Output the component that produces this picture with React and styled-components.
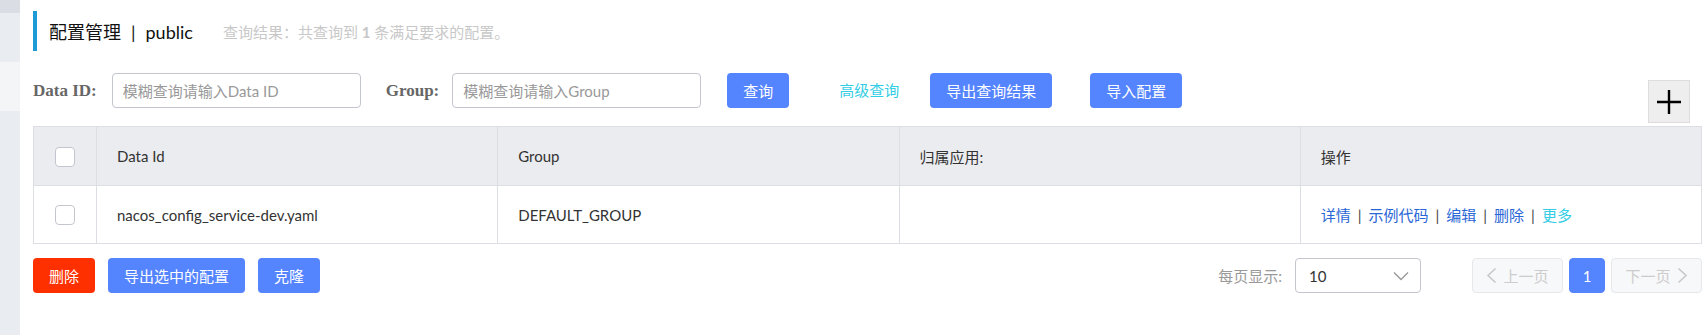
import React from 'react'
import styled, { createGlobalStyle, css } from 'styled-components'

const GlobalStyle = createGlobalStyle`
  html, body {
    margin: 0;
    padding: 0;
    background: #fff;
  }
  body {
    font-family: Lato, "Noto Sans CJK SC", sans-serif;
    font-size: 15px;
    color: #333;
  }
  * {
    box-sizing: border-box;
  }
`

const Page = styled.div`
  display: flex;
  width: 1706px;
  height: 335px;
  overflow: hidden;
`

const Sidebar = styled.div`
  display: flex;
  flex-direction: column;
  width: 20px;
  flex-shrink: 0;
`

const SideBlock = styled.div`
  height: ${({ h }) => (h ? `${h}px` : 'auto')};
  flex: ${({ h }) => (h ? 'none' : '1')};
  background: ${({ tone }) =>
    tone === 'dark' ? '#dadde3' : tone === 'light' ? '#f4f5f7' : '#e9ecf0'};
`

const Main = styled.div`
  flex: 1;
  padding: 11px 4px 0 13px;
  min-width: 0;
`

const TitleBar = styled.div`
  display: flex;
  align-items: center;
  height: 40px;
  border-left: 4px solid #1b9ad6;
  padding-left: 12px;
`

const Title = styled.span`
  font-size: 18px;
  color: #111;
`

const TitleSep = styled.span`
  margin: 0 10px;
`

const Summary = styled.span`
  margin-left: 30px;
  font-size: 15px;
  color: #c8c8c8;
  b {
    font-weight: bold;
  }
`

const SearchRow = styled.div`
  display: flex;
  align-items: flex-start;
  margin-top: 22px;
`

const Label = styled.label`
  height: 35px;
  line-height: 35px;
  font-family: "Liberation Serif", serif;
  font-weight: bold;
  font-size: 17px;
  color: #666;
  margin-right: ${({ gap }) => gap}px;
`

const Input = styled.input`
  width: 249px;
  height: 35px;
  border: 1px solid #c4c6cf;
  border-radius: 4px;
  padding: 0 10px;
  font-family: Lato, "Noto Sans CJK SC", sans-serif;
  font-size: 15px;
  color: #333;
  outline: none;
  margin-right: ${({ gap }) => gap}px;
  &::placeholder {
    color: #999;
  }
`

const Button = styled.button`
  height: 35px;
  padding: 0 16px;
  border: none;
  border-radius: 4px;
  font-family: Lato, "Noto Sans CJK SC", sans-serif;
  font-size: 15px;
  color: #fff;
  cursor: pointer;
  background: ${({ danger }) => (danger ? '#ff3000' : '#5584ff')};
  margin-right: ${({ gap = 0 }) => gap}px;
`

const TextLink = styled.a`
  height: 35px;
  line-height: 35px;
  color: #33cde5;
  cursor: pointer;
  margin-right: ${({ gap = 0 }) => gap}px;
`

const PlusBox = styled.button`
  margin: 7px 12px 0 auto;
  width: 42px;
  height: 43px;
  background: #eee;
  border: 1px solid #ddd;
  display: flex;
  align-items: center;
  justify-content: center;
  padding: 0;
  cursor: pointer;
`

const Table = styled.table`
  width: 100%;
  margin-top: 3px;
  table-layout: fixed;
  border-collapse: collapse;
  border: 1px solid #dcdee3;
`

const HeadCell = styled.th`
  height: 59px;
  padding: 0 20px;
  background: #ebecf0;
  border-right: 1px solid #dcdee3;
  border-bottom: 1px solid #dcdee3;
  text-align: left;
  font-weight: normal;
  font-size: 15px;
  color: #333;
`

const Cell = styled.td`
  height: 58px;
  padding: 0 20px;
  border-right: 1px solid #dcdee3;
  font-size: 15px;
  color: #333;
  ${({ center }) =>
    center &&
    css`
      padding: 0;
      text-align: center;
    `}
`

const CheckBox = styled.span`
  display: inline-block;
  vertical-align: middle;
  width: 20px;
  height: 20px;
  border: 1px solid #c4c6cf;
  border-radius: 4px;
  background: #fff;
`

const Action = styled.a`
  color: ${({ more }) => (more ? '#33cde5' : '#2a66d6')};
  cursor: pointer;
`

const ActionSep = styled.span`
  margin: 0 7px;
  color: #444;
`

const Footer = styled.div`
  display: flex;
  align-items: center;
  margin-top: 14px;
`

const PagerArea = styled.div`
  display: flex;
  align-items: center;
  margin-left: auto;
`

const PageSizeLabel = styled.span`
  color: #999;
  margin-right: 13px;
`

const Select = styled.div`
  display: flex;
  align-items: center;
  justify-content: space-between;
  width: 126px;
  height: 35px;
  padding: 0 11px 0 13px;
  border: 1px solid #c4c6cf;
  border-radius: 4px;
  color: #333;
  margin-right: 51px;
`

const PageButton = styled.button`
  display: flex;
  align-items: center;
  justify-content: center;
  gap: 6px;
  height: 35px;
  width: ${({ w }) => w}px;
  padding: 0;
  border-radius: 4px;
  font-family: Lato, "Noto Sans CJK SC", sans-serif;
  font-size: 15px;
  margin-left: ${({ gap = 0 }) => gap}px;
  ${({ active }) =>
    active
      ? css`
          background: #5584ff;
          border: 1px solid #5584ff;
          color: #fff;
        `
      : css`
          background: #f7f8fa;
          border: 1px solid #e6e7eb;
          color: #ccc;
        `}
`

const Chevron = ({ dir }) => (
  <svg width="11" height="17" viewBox="0 0 11 17">
    <path
      d={dir === 'left' ? 'M9.5 1.5 L2 8.5 L9.5 15.5' : 'M1.5 1.5 L9 8.5 L1.5 15.5'}
      fill="none"
      stroke="#c8c8c8"
      strokeWidth="1.6"
    />
  </svg>
)

const actions = ['详情', '示例代码', '编辑', '删除']

export default function App() {
  return (
    <>
      <GlobalStyle />
      <Page>
        <Sidebar>
          <SideBlock tone="dark" h={13} />
          <SideBlock h={49} />
          <SideBlock tone="light" h={49} />
          <SideBlock />
        </Sidebar>
        <Main>
          <TitleBar>
            <Title>
              配置管理<TitleSep>|</TitleSep>public
            </Title>
            <Summary>
              查询结果：共查询到 <b>1</b> 条满足要求的配置。
            </Summary>
          </TitleBar>

          <SearchRow>
            <Label gap={15}>Data ID:</Label>
            <Input gap={25} placeholder="模糊查询请输入Data ID" />
            <Label gap={13}>Group:</Label>
            <Input gap={26} placeholder="模糊查询请输入Group" />
            <Button gap={50}>查询</Button>
            <TextLink gap={31}>高级查询</TextLink>
            <Button gap={38}>导出查询结果</Button>
            <Button>导入配置</Button>
            <PlusBox>
              <svg width="26" height="26" viewBox="0 0 26 26">
                <path d="M13 1 V25 M1 13 H25" stroke="#000" strokeWidth="2.4" />
              </svg>
            </PlusBox>
          </SearchRow>

          <Table>
            <colgroup>
              <col style={{ width: 63 }} />
              <col />
              <col />
              <col />
              <col />
            </colgroup>
            <thead>
              <tr>
                <HeadCell style={{ padding: 0, textAlign: 'center' }}>
                  <CheckBox />
                </HeadCell>
                <HeadCell>Data Id</HeadCell>
                <HeadCell>Group</HeadCell>
                <HeadCell>归属应用:</HeadCell>
                <HeadCell>操作</HeadCell>
              </tr>
            </thead>
            <tbody>
              <tr>
                <Cell center>
                  <CheckBox />
                </Cell>
                <Cell>nacos_config_service-dev.yaml</Cell>
                <Cell>DEFAULT_GROUP</Cell>
                <Cell />
                <Cell>
                  {actions.map((a) => (
                    <React.Fragment key={a}>
                      <Action>{a}</Action>
                      <ActionSep>|</ActionSep>
                    </React.Fragment>
                  ))}
                  <Action more>更多</Action>
                </Cell>
              </tr>
            </tbody>
          </Table>

          <Footer>
            <Button danger gap={13}>删除</Button>
            <Button gap={13}>导出选中的配置</Button>
            <Button>克隆</Button>
            <PagerArea>
              <PageSizeLabel>每页显示:</PageSizeLabel>
              <Select>
                <span>10</span>
                <svg width="16" height="10" viewBox="0 0 16 10">
                  <path d="M1 1.5 L8 8.5 L15 1.5" fill="none" stroke="#999" strokeWidth="1.4" />
                </svg>
              </Select>
              <PageButton w={91}>
                <Chevron dir="left" />
                上一页
              </PageButton>
              <PageButton w={36} gap={6} active>
                1
              </PageButton>
              <PageButton w={91} gap={6}>
                下一页
                <Chevron dir="right" />
              </PageButton>
            </PagerArea>
          </Footer>
        </Main>
      </Page>
    </>
  )
}
